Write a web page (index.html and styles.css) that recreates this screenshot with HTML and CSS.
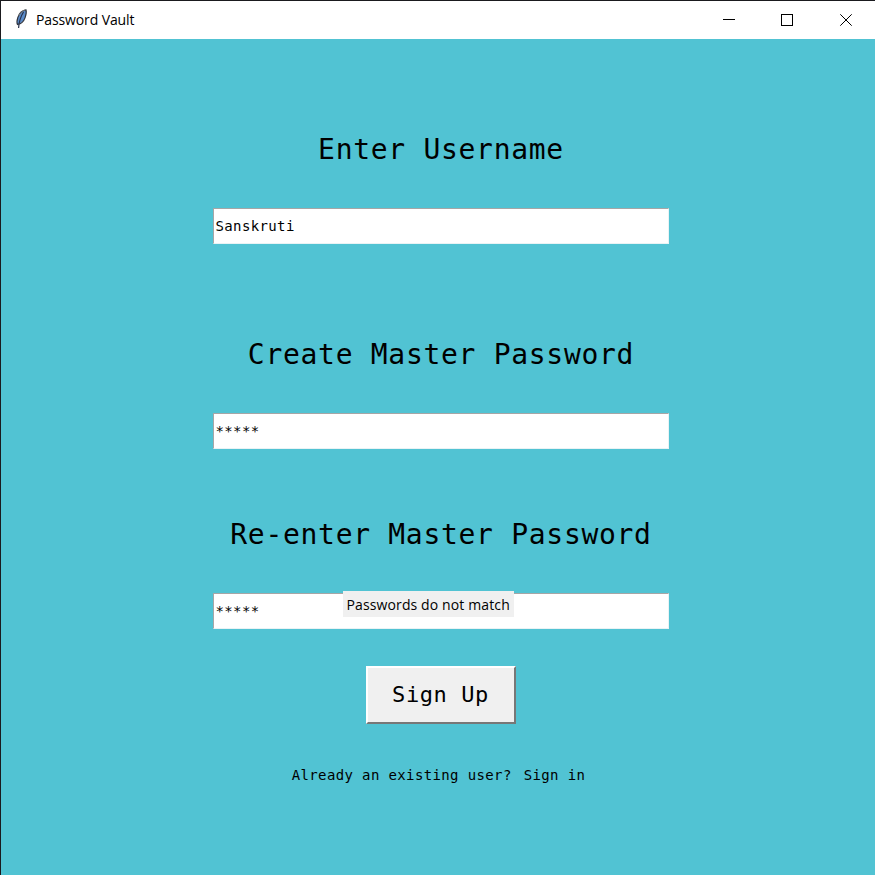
FILE: index.html
```html
<!DOCTYPE html>
<html lang="en">
<head>
<meta charset="utf-8">
<title>Password Vault</title>
<link rel="stylesheet" href="styles.css">
</head>
<body>
<div class="window">
  <header class="titlebar">
    <svg class="feather" width="16" height="22" viewBox="0 0 16 22">
      <path d="M13 1.800C9 2.400 6 5.600 4.800 9.600c-.9 2.800-1.200 5-.3 6.900 3.300-.6 6.300-3.200 7.600-6.900C13 7 13.800 4.500 13 1.800z" fill="#5a8bc9" stroke="#30353f" stroke-width="1.200"/>
      <path d="M10.500 4C8 8 6 13 5.600 20" fill="none" stroke="#27304a" stroke-width="1.200"/>
      <path d="M12.500 1.800c-3 .7-5.300 3-6.700 6" fill="none" stroke="#777" stroke-width="1"/>
    </svg>
    <span class="title">Password Vault</span>
    <svg class="controls" width="160" height="38" viewBox="0 0 160 38" fill="none" stroke="#000" stroke-width="1">
      <path d="M8 18.500h12M66.500 13.500h11v11h-11z" shape-rendering="crispEdges"/>
      <path d="M125.300 13.300l11.400 11.400M136.700 13.300l-11.400 11.400"/>
    </svg>
  </header>
  <main class="form">
    <label class="heading">Enter Username</label>
    <div class="field">Sanskruti</div>
    <label class="heading create">Create Master Password</label>
    <div class="field">*****</div>
    <label class="heading reenter">Re-enter Master Password</label>
    <div class="field">*****<span class="notice">Passwords do not match</span></div>
    <button class="signup">Sign Up</button>
    <p class="links"><span>Already an existing user?</span><span>Sign in</span></p>
  </main>
</div>
</body>
</html>
```
FILE: styles.css
```css
* { box-sizing: border-box; }
body { margin: 0; overflow: hidden; }
.window {
  width: 875px; height: 875px;
  display: flex; flex-direction: column;
  border-top: 1px solid #1a1a1e; border-left: 1px solid #1a1a1e;
  background: #51c3d3; color: #000;
}
.titlebar {
  display: flex; align-items: center;
  height: 38px; flex: none; padding-left: 12px; background: #fff;
}
.feather { margin-top: -2px; }
.title {
  margin-left: 7px;
  font: 14px/20px "Open Sans", "Noto Sans", sans-serif; letter-spacing: -.12px;
}
.controls { margin-left: auto; margin-right: 0; }
.form {
  flex: 1; display: flex; flex-direction: column; align-items: center;
  padding: 90px 0 0 5px;
  font-family: "DejaVu Sans Mono", monospace;
}
.heading {
  height: 40px; margin-bottom: 39px; padding-left: 1px;
  font-size: 28px; line-height: 42px; letter-spacing: .7px; white-space: pre;
}
.create { margin-top: 90px; }
.reenter { margin-top: 65px; }
.field {
  position: relative;
  width: 456px; height: 36px; padding-left: 2px;
  border: 1px solid; border-color: #a6a6a6 #e9f3f5 #e9f3f5 #a6a6a6;
  background: #fff;
  font-size: 14px; line-height: 34px; letter-spacing: .37px;
}
.notice {
  position: absolute; left: 129px; top: -3px;
  width: 171px; height: 26px; padding-left: 4px;
  background: #f0f0f0;
  font: 14px/28px "Open Sans", "Noto Sans", sans-serif; letter-spacing: .12px; white-space: nowrap;
}
.signup {
  width: 150px; height: 58px; margin-top: 37px; padding: 0;
  border: 2px solid; border-color: #fff #777 #777 #fff;
  background: #f0f0f0; color: #000;
  font: 22px/54px "DejaVu Sans Mono", monospace; letter-spacing: .6px;
}
.links {
  display: flex; gap: 12px; margin: 41px 0 0; padding-right: 4px;
  font-size: 14px; line-height: 20px; letter-spacing: .37px;
}
```
